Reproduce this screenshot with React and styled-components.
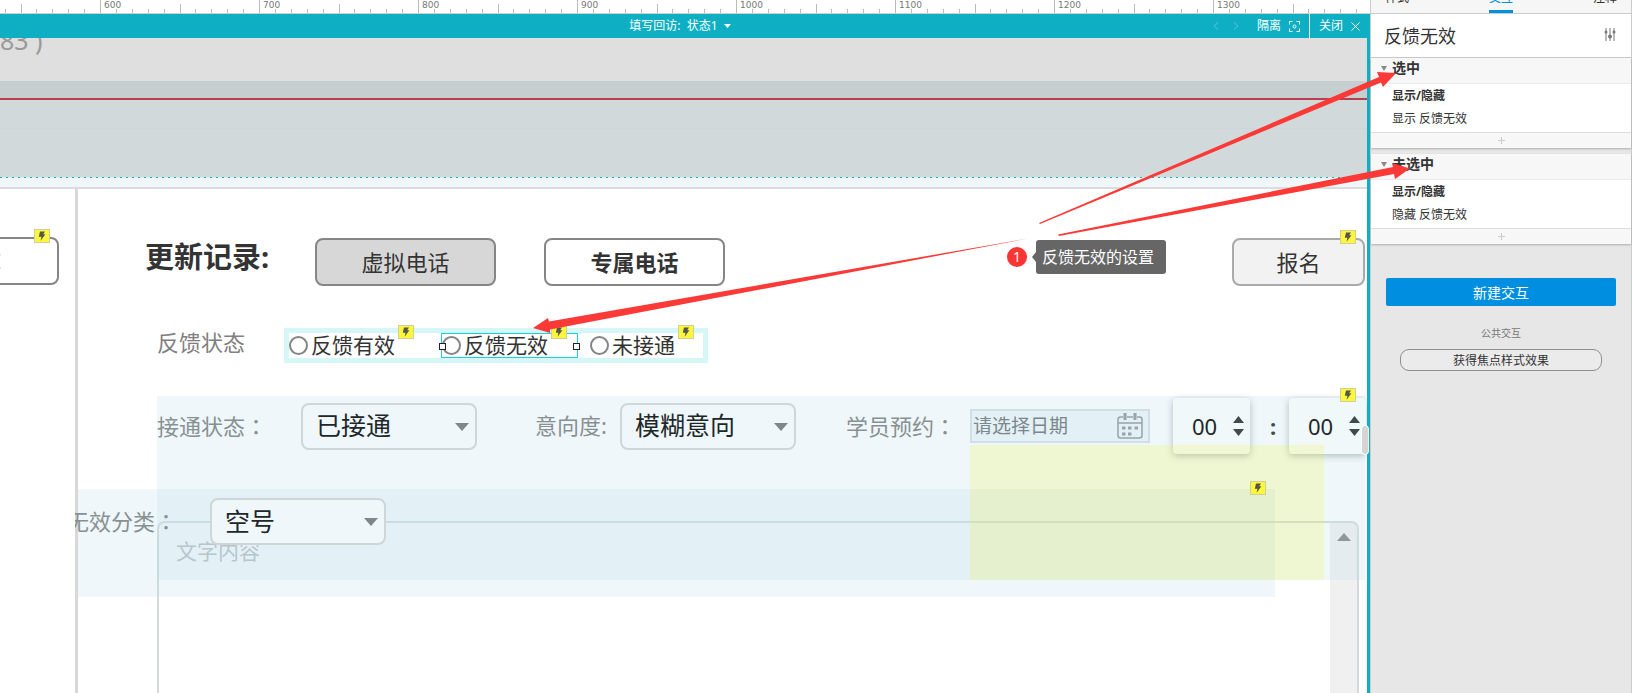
import React, { useState } from 'react';
import styled, { createGlobalStyle } from 'styled-components';

const GlobalStyle = createGlobalStyle`
  * {
    box-sizing: border-box;
  }

  body {
    margin: 0;
    overflow: hidden;
    background: #e7e7e7;
    color: #333;
    font-family: "Noto Sans", "Noto Sans CJK SC", sans-serif;
    font-size: 12px;
  }

  button, input, select, textarea {
    margin: 0;
    padding: 0;
    border: none;
    outline: none;
    background: none;
    color: inherit;
    font: inherit;
  }
`;

const Shell = styled.div`
  position: relative;
  display: grid;
  grid-template-columns: minmax(0, 1fr) 262px;
  height: 100vh;
  overflow: hidden;
`;

/* ---------- ruler ---------- */

const Editor = styled.main`
  display: flex;
  flex-direction: column;
  min-width: 0;
  min-height: 0;
`;

const Ruler = styled.div`
  display: flex;
  height: 14px;
  padding-left: 100px;
  overflow: hidden;
  background: #fff;
  border-bottom: 1px solid #d0d0d0;
`;

const RulerUnit = styled.div`
  position: relative;
  flex: none;
  width: 159px;
  padding-left: 4px;
  color: #777;
  font-family: "DejaVu Sans", sans-serif;
  font-size: 9px;
  line-height: 11px;

  &:first-child {
    margin-left: -159px;
  }
`;

const Ticks = styled.svg`
  position: absolute;
  top: 0;
  left: 0;
`;

/* ---------- state bar ---------- */

const Workspace = styled.div`
  position: relative;
  display: flex;
  flex: 1;
  flex-direction: column;
  min-height: 0;
  border-right: 3px solid #0fafc3;
`;

const StateBar = styled.div`
  display: grid;
  grid-template-columns: 1fr auto 1fr;
  align-items: center;
  flex: none;
  height: 24px;
  padding-right: 7px;
  background: #0fafc3;
  color: #fff;
`;

const BarButton = styled.button`
  display: flex;
  align-items: center;
  gap: 8px;
  height: 24px;
  line-height: 24px;
`;

const StateButton = styled(BarButton)`
  grid-column: 2;
  gap: 6px;
`;

const BarActions = styled.div`
  display: flex;
  justify-content: flex-end;
  gap: 9px;
`;

const Stepper = styled.div`
  display: flex;
  align-items: center;
  gap: 14px;
  margin-right: 9px;
`;

const BarDivider = styled.span`
  width: 1px;
  background: #fff;
`;

/* ---------- canvas ---------- */

const Canvas = styled.div`
  display: flex;
  flex: 1;
  flex-direction: column;
  min-height: 0;
  overflow: hidden;
  background: #fff;
`;

const Band = styled.div`
  flex: none;
  height: ${props => props.$height}px;
  background: ${props => props.$color};
`;

const PhoneBand = styled(Band)`
  overflow: hidden;
  color: #999;
  font-size: 25px;
  line-height: 4px;
  white-space: pre;
`;

const GuideBand = styled(Band)`
  padding-top: 28px;

  &::before {
    content: "";
    display: block;
    height: 1px;
    background: #ced6dd;
  }
`;

const DottedLine = styled.div`
  flex: none;
  height: 1px;
  background: repeating-linear-gradient(90deg, #1aafbf 0 2px, #e3ecee 2px 6px);
`;

const Panes = styled.div`
  display: grid;
  grid-template-columns: 75px minmax(0, 1fr);
  flex: 1;
  min-height: 0;
`;

const SidePane = styled.div`
  display: flex;
  justify-content: flex-end;
  align-items: flex-start;
  padding: 48px 16px 0 0;
  overflow: hidden;
`;

const RecordPane = styled.section`
  position: relative;
  z-index: 0;
  display: flex;
  flex-direction: column;
  overflow: hidden;
  box-shadow: inset 3px 0 #d8d8d8;
`;

const TitleRow = styled.div`
  display: flex;
  flex: none;
  gap: 48px;
  padding: 49px 2px 0 70px;
`;

const RecordTitle = styled.h2`
  width: 122px;
  margin: 0;
  font-size: 29px;
  line-height: 38px;
  white-space: nowrap;
`;

const CallButton = styled.button`
  position: relative;
  flex: none;
  width: ${props => props.$width || 181}px;
  height: 48px;
  padding-bottom: 3px;
  border: 2px solid ${props => props.$line || '#868686'};
  border-radius: 8px;
  background: ${props => props.$fill || '#fff'};
  font-size: 22px;
  font-weight: ${props => (props.$strong ? 700 : 400)};
`;

const SignUpButton = styled(CallButton)`
  margin-left: auto;
`;

const Badge = styled.span`
  position: absolute;
  z-index: 3;
  display: flex;
  align-items: center;
  justify-content: center;
  width: 16px;
  height: 14px;
  border: 1px solid #cfcf9a;
  background: #fdf63c;
`;

const CornerBadge = styled(Badge)`
  top: -10px;
  right: 7px;
`;

const TimeBadge = styled(Badge)`
  top: -10px;
  right: 10px;
`;

const TextBadge = styled(Badge)`
  top: -8px;
  left: calc(100% + 3px);
`;

const Label = styled.label`
  flex: none;
  width: ${props => props.$width}px;
  padding-bottom: 2px;
  color: ${props => props.$color || '#879192'};
  font-size: 22px;
  line-height: 28px;
  white-space: nowrap;
`;

// the TC face centres its full-width colon
const WideColon = styled.span`
  font-family: "Noto Sans CJK TC", sans-serif;
`;

const StatusRow = styled.div`
  display: flex;
  flex: none;
  margin: 42px 0 0 82px;
`;

const RadioGroup = styled.div`
  display: flex;
  height: 35px;
  width: 424px;
  border: 5px solid #d6f7f7;
`;

const RadioOption = styled.label`
  position: relative;
  display: flex;
  align-items: center;
  gap: 3px;
  width: ${props => props.$width}px;
  margin-right: ${props => (props.$selected ? 12 : 0)}px;
  border: ${props => (props.$selected ? '1px solid #1cd0d8' : 'none')};
  font-size: 21px;
  line-height: 25px;
`;

const RadioDot = styled.input`
  flex: none;
  width: 19px;
  height: 19px;
  appearance: none;
  border: 2px solid #858585;
  border-radius: 50%;
  background: #fff;
`;

const OptionText = styled.span`
  position: relative;
`;

const Handle = styled.span`
  position: absolute;
  top: 9px;
  ${props => props.$side}: -3px;
  width: 7px;
  height: 7px;
  border: 1px solid #222;
  background: #fff;
`;

const ConnectRow = styled.div`
  position: relative;
  z-index: 1;
  display: flex;
  align-items: center;
  flex: none;
  height: 60px;
  margin: 33px 0 0 82px;
`;

const InvalidRow = styled.div`
  position: relative;
  z-index: 1;
  display: flex;
  align-items: center;
  flex: none;
  margin: 42px 0 -24px -8px;
`;

const SelectBox = styled.div`
  position: relative;
  flex: none;
  width: 176px;
  height: 47px;
  margin-right: ${props => props.$gap || 0}px;

  svg {
    position: absolute;
    top: 20px;
    right: 8px;
    pointer-events: none;
  }
`;

const Select = styled.select`
  width: 100%;
  height: 100%;
  padding: 0 13px 2px;
  appearance: none;
  border: 2px solid #d0d6d8;
  border-radius: 8px;
  background: #eff7fa;
  color: #202729;
  font-size: 25px;
`;

const DateBox = styled.div`
  display: flex;
  align-items: center;
  flex: none;
  width: 180px;
  height: 34px;
  margin-right: 23px;
  padding: 0 5px 0 1px;
  border: 2px solid #d0dfe5;
  background: #e3f0f5;
`;

const DateInput = styled.input`
  flex: 1;
  min-width: 0;
  color: #7b878b;
  font-size: 19px;

  &::placeholder {
    color: #7b878b;
    opacity: 1;
  }
`;

const TimeBox = styled.div`
  position: relative;
  display: flex;
  align-items: center;
  flex: none;
  width: 77px;
  height: 56px;
  padding-left: 19px;
  border-radius: 4px;
  background: #f1f8fa;
  box-shadow: 0 2px 7px rgba(60, 80, 90, 0.35);
`;

const TimeInput = styled.input`
  width: 36px;
  color: #202729;
  font-size: 22px;
`;

const Spinner = styled.div`
  display: flex;
  flex-direction: column;
  gap: 6px;
  padding-left: 5px;

  button, svg {
    display: block;
  }
`;

const TimeColon = styled.span`
  flex: none;
  width: 39px;
  padding-left: 7px;
  color: #3f4a4c;
  font-size: 22px;
  font-weight: 700;
  line-height: 30px;
  text-align: center;
`;

const NoteBox = styled.div`
  display: flex;
  flex: 1;
  min-height: 0;
  margin: 0 8px 0 82px;
  border: 2px solid #d5d9db;
  border-bottom: none;
  border-radius: 8px 8px 0 0;
  overflow: hidden;
`;

const NoteInput = styled.textarea`
  flex: 1;
  padding: 13px 17px;
  overflow: hidden;
  resize: none;
  font-size: 21px;
  line-height: 30px;

  &::placeholder {
    color: #b2b2b2;
    opacity: 1;
  }
`;

const NoteTrack = styled.div`
  flex: none;
  width: 27px;
  padding: 10px 0 0 7px;
  background: #f0f0f0;

  svg {
    display: block;
  }
`;

const Tint = styled.div`
  position: absolute;
  z-index: 0;
  background: rgba(191, 223, 235, 0.25);
  pointer-events: none;
`;

const ConnectTint = styled(Tint)`
  top: 207px;
  right: 2px;
  left: 82px;
  height: 184px;
`;

const InvalidTint = styled(Tint)`
  top: 300px;
  left: 3px;
  width: 1197px;
  height: 108px;
`;

const CalendarTint = styled(Tint)`
  top: 256px;
  left: 895px;
  z-index: 2;
  width: 354px;
  height: 135px;
  background: rgba(239, 247, 50, 0.2);
`;

const TintBadge = styled(Badge)`
  top: 292px;
  left: 1175px;
`;

const SplitterThumb = styled.div`
  position: absolute;
  top: 411px;
  right: -2px;
  z-index: 4;
  width: 8px;
  height: 30px;
  border: 1px solid #fff;
  border-radius: 4px;
  background: #d5d5d5;
`;

/* ---------- inspector ---------- */

const Inspector = styled.aside`
  border: solid #ccc;
  border-width: 0 1px;
  background: #e7e7e7;
`;

const Tabs = styled.nav`
  display: flex;
  justify-content: space-between;
  height: 14px;
  padding: 0 14px;
  overflow: hidden;
  border-bottom: 1px solid #ccc;
  background: #f6f6f6;
`;

const Tab = styled.button`
  display: flex;
  align-items: flex-end;
  height: 13px;
  padding-bottom: 5px;
  border-bottom: 3px solid ${props => (props.$active ? '#0090e0' : 'transparent')};
  color: ${props => (props.$active ? '#0090e0' : '#333')};
  line-height: 14px;
`;

const WidgetName = styled.div`
  display: flex;
  align-items: center;
  justify-content: space-between;
  height: 44px;
  padding: 0 15px 2px 13px;
  border-bottom: 1px solid #ccc;
  background: #fff;
  font-size: 18px;
`;

const CaseBlock = styled.section`
  margin-bottom: 6px;
  background: #fff;
  box-shadow: 0 1px 2px rgba(0, 0, 0, 0.25);
`;

const CaseHeader = styled.h3`
  display: flex;
  align-items: center;
  gap: 5px;
  height: 26px;
  margin: 0;
  padding: 0 0 5px 10px;
  border-bottom: 1px solid #ececec;
  background: #f7f7f7;
  font-size: 14px;
  line-height: 20px;
`;

const CaseBody = styled.div`
  height: 48px;
  padding-left: 21px;
  line-height: 23px;
`;

const ActionName = styled.div`
  font-weight: 700;
`;

const AddRow = styled.button`
  display: flex;
  align-items: center;
  justify-content: center;
  width: 100%;
  height: 16px;
  border-top: 1px solid #ddd;
  background: #f7f7f7;
`;

const PanelActions = styled.div`
  display: flex;
  flex-direction: column;
  align-items: center;
  padding: 28px 15px 0;
`;

const NewButton = styled.button`
  width: 100%;
  height: 28px;
  border-radius: 2px;
  background: #008fe0;
  color: #fff;
  font-size: 14px;
`;

const SharedTitle = styled.div`
  margin: 20px 0 9px;
  color: #777;
  font-size: 10px;
  line-height: 14px;
`;

const SharedButton = styled.button`
  width: 202px;
  height: 22px;
  border: 1px solid #8f8f8f;
  border-radius: 9px;
  background: #ebebeb;
`;

/* ---------- annotations ---------- */

const Arrows = styled.svg`
  position: absolute;
  top: 0;
  left: 0;
  z-index: 5;
  pointer-events: none;
`;

const Note = styled.div`
  position: absolute;
  top: 240px;
  left: 1007px;
  z-index: 6;
  display: flex;
  align-items: center;
  gap: 5px;
  color: #fff;
`;

const NoteNumber = styled.span`
  width: 20px;
  height: 20px;
  border-radius: 50%;
  background: #fb3434;
  font-size: 14px;
  line-height: 20px;
  text-align: center;
`;

const NoteText = styled.span`
  display: flex;
  align-items: center;

  span {
    width: 130px;
    height: 34px;
    padding: 0 6px;
    border-radius: 3px;
    background: #666;
    font-size: 16px;
    line-height: 34px;
    white-space: nowrap;
  }
`;

const Triangle = ({ width, height, color, up }) => (
  <svg width={width} height={height} viewBox="0 0 10 10" preserveAspectRatio="none" aria-hidden="true">
    <path d={up ? 'M0 10L5 0L10 10Z' : 'M0 0H10L5 10Z'} fill={color} />
  </svg>
);

const Bolt = () => (
  <svg width="8" height="10" viewBox="0 0 8 10" aria-hidden="true">
    <path d="M2 0.500H7L5.200 3.200H7.400L2.600 9.800L3.400 5.800H0.800Z" fill="#55564a" />
  </svg>
);

const rulerMarks = ['', '600', '700', '800', '900', '1000', '1100', '1200', '1300'];

const RulerMark = ({ text }) => (
  <RulerUnit>
    <Ticks width="159" height="13" shapeRendering="crispEdges" stroke="#bbb">
      {[0, 1, 2, 3, 4, 5, 6, 7, 8, 9].map(i => {
        const x = Math.round(i * 15.9) + 0.5;
        const top = i === 0 ? 0 : i === 5 ? 4 : 9;
        return <line key={i} x1={x} x2={x} y1={top} y2="13" />;
      })}
    </Ticks>
    {text}
  </RulerUnit>
);

const Dropdown = ({ id, value, gap }) => (
  <SelectBox $gap={gap}>
    <Select id={id} defaultValue={value}>
      <option>{value}</option>
    </Select>
    <Triangle width={14} height={8} color="#7f8789" />
  </SelectBox>
);

const TimeField = ({ label, badge }) => (
  <TimeBox>
    <TimeInput aria-label={label} defaultValue="00" />
    <Spinner>
      <button aria-label={`${label} +`}><Triangle width={11} height={7} color="#3f4a4c" up /></button>
      <button aria-label={`${label} -`}><Triangle width={11} height={7} color="#3f4a4c" /></button>
    </Spinner>
    {badge && <TimeBadge><Bolt /></TimeBadge>}
  </TimeBox>
);

const CalendarIcon = () => (
  <svg width="26" height="26" viewBox="0 0 26 26" fill="none" stroke="#96a4a9" aria-hidden="true">
    <path d="M6 4H3.5Q1 4 1 6.500V22.500Q1 25 3.500 25H22.500Q25 25 25 22.500V6.500Q25 4 22.500 4H20M10 4H16" strokeWidth="1.500" />
    <path d="M1 10H25" strokeWidth="1.500" />
    <path d="M8 0V7M18 0V7" strokeWidth="3" />
    <path d="M5 15H8.500M11 15H14.500M17.500 15H21M5 21H8.500M11 21H14.500" strokeWidth="3" />
  </svg>
);

const cases = [
  { event: '选中', action: '显示/隐藏', target: '显示 反馈无效' },
  { event: '未选中', action: '显示/隐藏', target: '隐藏 反馈无效' }
];

const options = [
  { text: '反馈有效', width: 152 },
  { text: '反馈无效', width: 137, selected: true },
  { text: '未接通', width: 100 }
];

const App = () => {
  const [tab, setTab] = useState('交互');

  return (
    <Shell>
      <GlobalStyle />
      <Editor>
        <Ruler>
          {rulerMarks.map(mark => <RulerMark key={mark} text={mark} />)}
        </Ruler>

        <Workspace>
          <StateBar>
            <StateButton>
              <span>填写回访:&nbsp; 状态1</span>
              <Triangle width={7} height={4} color="#fff" />
            </StateButton>
            <BarActions>
              <Stepper>
                <svg width="6" height="8" fill="none" stroke="#5cc5d2" aria-hidden="true"><path d="M5 0.500L1 4L5 7.500" /></svg>
                <svg width="6" height="8" fill="none" stroke="#5cc5d2" aria-hidden="true"><path d="M1 0.500L5 4L1 7.500" /></svg>
              </Stepper>
              <BarButton>
                隔离
                <svg width="11" height="11" fill="none" stroke="#fff" aria-hidden="true">
                  <path d="M3.500 0.500H0.500V3.500M7.500 0.500H10.500V3.500M3.500 10.500H0.500V7.500M7.500 10.500H10.500V7.500" />
                  <circle cx="5.500" cy="5.500" r="1.500" />
                </svg>
              </BarButton>
              <BarDivider />
              <BarButton>
                关闭
                <svg width="9" height="9" stroke="#fff" aria-hidden="true"><path d="M0.500 0.500L8.500 8.500M8.500 0.500L0.500 8.500" /></svg>
              </BarButton>
            </BarActions>
          </StateBar>

          <Canvas>
            <PhoneBand $height={43} $color="#dfdfdf">83 )</PhoneBand>
            <Band $height={17} $color="#c6cecf" />
            <Band $height={2} $color="#b83f52" />
            <GuideBand $height={77} $color="#d1d9db" />
            <DottedLine />
            <Band $height={9} $color="#eff7fa" />
            <Band $height={2} $color="#dcdcdc" />

            <Panes>
              <SidePane>
                <CallButton $width={160}>
                  入库
                  <CornerBadge><Bolt /></CornerBadge>
                </CallButton>
              </SidePane>

              <RecordPane>
                <TitleRow>
                  <RecordTitle>更新记录:</RecordTitle>
                  <CallButton $fill="#d7d7d7">虚拟电话</CallButton>
                  <CallButton $strong>专属电话</CallButton>
                  <SignUpButton $width={133} $fill="#f2f2f2" $line="#aaa">
                    报名
                    <CornerBadge><Bolt /></CornerBadge>
                  </SignUpButton>
                </TitleRow>

                <StatusRow>
                  <Label as="span" $width={127} $color="#7f7f7f">反馈状态</Label>
                  <RadioGroup role="radiogroup" aria-label="反馈状态">
                    {options.map(option => (
                      <RadioOption key={option.text} $width={option.width} $selected={option.selected}>
                        <RadioDot type="radio" name="feedback" />
                        <OptionText>
                          {option.text}
                          <TextBadge><Bolt /></TextBadge>
                        </OptionText>
                        {option.selected && <Handle $side="left" />}
                        {option.selected && <Handle $side="right" />}
                      </RadioOption>
                    ))}
                  </RadioGroup>
                </StatusRow>

                <ConnectRow>
                  <Label htmlFor="connect" $width={144}>接通状态<WideColon>：</WideColon></Label>
                  <Dropdown id="connect" value="已接通" gap={58} />
                  <Label htmlFor="intent" $width={85}>意向度:</Label>
                  <Dropdown id="intent" value="模糊意向" gap={50} />
                  <Label htmlFor="date" $width={124}>学员预约<WideColon>：</WideColon></Label>
                  <DateBox>
                    <DateInput id="date" placeholder="请选择日期" />
                    <CalendarIcon />
                  </DateBox>
                  <TimeField label="时" />
                  <TimeColon>:</TimeColon>
                  <TimeField label="分" badge />
                </ConnectRow>

                <InvalidRow>
                  <Label htmlFor="invalid" $width={143}>无效分类<WideColon>：</WideColon></Label>
                  <Dropdown id="invalid" value="空号" />
                </InvalidRow>

                <NoteBox>
                  <NoteInput aria-label="文字内容" placeholder="文字内容" />
                  <NoteTrack>
                    <Triangle width={14} height={8} color="#7f7f7f" up />
                  </NoteTrack>
                </NoteBox>

                <ConnectTint />
                <InvalidTint />
                <CalendarTint />
                <TintBadge><Bolt /></TintBadge>
              </RecordPane>
            </Panes>
          </Canvas>
          <SplitterThumb />
        </Workspace>
      </Editor>

      <Inspector>
        <Tabs>
          {['样式', '交互', '注释'].map(name => (
            <Tab key={name} $active={tab === name} onClick={() => setTab(name)}>{name}</Tab>
          ))}
        </Tabs>
        <WidgetName>
          反馈无效
          <svg width="12" height="13" fill="#777" stroke="#777" aria-hidden="true">
            <path d="M2 0V13M6 0V13M10 0V13" />
            <circle cx="2" cy="4" r="1.500" stroke="none" />
            <circle cx="6" cy="8.500" r="2" stroke="none" />
            <circle cx="10" cy="4" r="1.500" stroke="none" />
          </svg>
        </WidgetName>
        {cases.map(item => (
          <CaseBlock key={item.event}>
            <CaseHeader>
              <Triangle width={6} height={5} color="#888" />
              {item.event}
            </CaseHeader>
            <CaseBody>
              <ActionName>{item.action}</ActionName>
              <div>{item.target}</div>
            </CaseBody>
            <AddRow aria-label="添加">
              <svg width="7" height="7" stroke="#ccc" aria-hidden="true"><path d="M3.500 0V7M0 3.500H7" /></svg>
            </AddRow>
          </CaseBlock>
        ))}
        <PanelActions>
          <NewButton>新建交互</NewButton>
          <SharedTitle>公共交互</SharedTitle>
          <SharedButton>获得焦点样式效果</SharedButton>
        </PanelActions>
      </Inspector>

      <Arrows width="1632" height="693" fill="#fb3a37" aria-hidden="true">
        <path d="M1039 223L1379 77L1377 72L1396 73L1383 87L1381 82.500L1040 224Z" />
        <path d="M1058 234.500L1393 167L1392 163L1410 168.500L1395 179L1394 174L1059 236Z" />
        <path d="M1028 238.500L549 321.500L548 318L533 328L550 333L550 329.500Z" />
      </Arrows>
      <Note>
        <NoteNumber>1</NoteNumber>
        <NoteText>
          <svg width="4" height="10" aria-hidden="true"><path d="M0 5L4 0V10Z" fill="#666" /></svg>
          <span>反馈无效的设置</span>
        </NoteText>
      </Note>
    </Shell>
  );
};

export default App;
